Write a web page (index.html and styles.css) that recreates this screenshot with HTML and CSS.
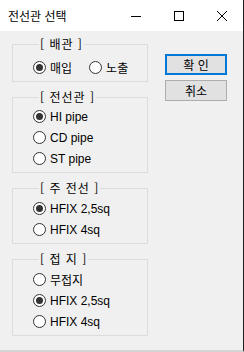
FILE: index.html
```html
<!DOCTYPE html>
<html lang="ko">
<head>
    <meta charset="UTF-8">
    <title>전선관 선택</title>
    <link rel="stylesheet" href="styles.css">
</head>
<body>
    <div class="window">
        <div class="titlebar">
            <span class="title">전선관 선택</span>
            <div class="controls">
                <span class="ctrl">
                    <svg width="10" height="10" viewBox="0 0 10 10"><path d="M0 5.5H10" stroke="#000" stroke-width="1"/></svg>
                </span>
                <span class="ctrl">
                    <svg width="10" height="10" viewBox="0 0 10 10"><rect x="0.5" y="0.5" width="9" height="9" fill="none" stroke="#000" stroke-width="1"/></svg>
                </span>
                <span class="ctrl">
                    <svg width="10" height="10" viewBox="0 0 10 10"><path d="M0 0L10 10M10 0L0 10" stroke="#000" stroke-width="1"/></svg>
                </span>
            </div>
        </div>
        <div class="content">
            <div class="groups">
                <fieldset class="group">
                    <legend>[ 배관 ]</legend>
                    <div class="row-inline">
                        <label class="opt"><input type="radio" name="pipe" checked> 매입</label>
                        <label class="opt"><input type="radio" name="pipe"> 노출</label>
                    </div>
                </fieldset>
                <fieldset class="group">
                    <legend>[ 전선관 ]</legend>
                    <label class="opt"><input type="radio" name="conduit" checked> HI pipe</label>
                    <label class="opt"><input type="radio" name="conduit"> CD pipe</label>
                    <label class="opt"><input type="radio" name="conduit"> ST pipe</label>
                </fieldset>
                <fieldset class="group tall">
                    <legend>[ 주 전선 ]</legend>
                    <label class="opt"><input type="radio" name="wire" checked> HFIX 2,5sq</label>
                    <label class="opt"><input type="radio" name="wire"> HFIX 4sq</label>
                </fieldset>
                <fieldset class="group tall">
                    <legend>[ 접 지 ]</legend>
                    <label class="opt"><input type="radio" name="ground"> 무접지</label>
                    <label class="opt"><input type="radio" name="ground" checked> HFIX 2,5sq</label>
                    <label class="opt"><input type="radio" name="ground"> HFIX 4sq</label>
                </fieldset>
            </div>
            <div class="actions">
                <button class="btn default">확 인</button>
                <button class="btn">취소</button>
            </div>
        </div>
    </div>
</body>
</html>
```

FILE: styles.css
```css
body {
    margin: 0;
    font-family: "Liberation Sans", "Noto Sans CJK KR", sans-serif;
    font-size: 12px;
    color: #000;
    background-color: #f0f0f0;
}
.window {
    width: 244px;
    height: 352px;
    box-sizing: border-box;
    border-right: 1px solid #1e1e1e;
    border-bottom: 2px solid #d4d4d4;
    background-color: #f0f0f0;
}
.titlebar {
    height: 31px;
    background-color: white;
    display: flex;
    align-items: center;
    justify-content: space-between;
}
.title {
    padding-left: 8px;
    font-family: "Noto Sans CJK KR", sans-serif;
    font-size: 12px;
}
.controls {
    display: flex;
}
.ctrl {
    width: 43px;
    height: 31px;
    display: flex;
    align-items: center;
    justify-content: center;
}
.content {
    display: flex;
    padding: 6px 0 0 12px;
}
.groups {
    width: 136px;
    display: flex;
    flex-direction: column;
    gap: 8px;
}
.group {
    margin: 0;
    padding: 2px 0 3px 20px;
    border: 1px solid #dcdcdc;
}
.group.tall {
    padding-top: 3px;
}
.group legend {
    padding: 0 1px;
    margin-left: 6px;
    line-height: 14px;
    letter-spacing: 1px;
    font-family: "Noto Sans CJK KR", sans-serif;
}
.opt {
    display: flex;
    align-items: center;
    height: 21px;
    gap: 4px;
}
.row-inline {
    display: flex;
    gap: 17px;
    padding: 4px 0 0;
}
.opt input {
    appearance: none;
    margin: 0;
    width: 13px;
    height: 13px;
    border: 1px solid #333;
    border-radius: 50%;
    background-color: white;
    display: flex;
    align-items: center;
    justify-content: center;
}
.opt input:checked::after {
    content: "";
    width: 7px;
    height: 7px;
    border-radius: 50%;
    background-color: #333;
}
.actions {
    display: flex;
    flex-direction: column;
    gap: 5px;
    margin: 17px 0 0 17px;
}
.btn {
    width: 62px;
    height: 21px;
    padding: 0;
    font-family: "Noto Sans CJK KR", sans-serif;
    font-size: 12px;
    background-color: #e1e1e1;
    border: 1px solid #adadad;
}
.btn.default {
    border: 2px solid #0078d7;
}
```
